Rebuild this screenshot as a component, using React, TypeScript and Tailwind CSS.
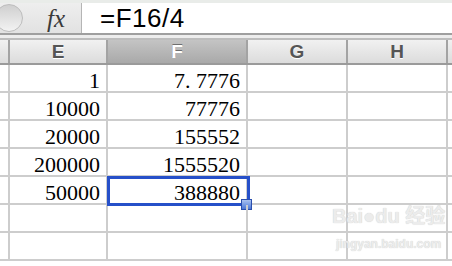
import React from "react";

const serif = { fontFamily: '"Liberation Serif", "Times New Roman", serif' };

const cols = [
  { key: "rh", w: "w-[10px]" },
  { key: "E", w: "w-[98px]" },
  { key: "F", w: "w-[140px]" },
  { key: "G", w: "w-[100px]" },
  { key: "H", w: "w-[100px]" },
];

// rows of data: [E, F]
const rows: [string, string][] = [
  ["1", "7. 7776"],
  ["10000", "77776"],
  ["20000", "155552"],
  ["200000", "1555520"],
  ["50000", "388880"],
  ["", ""],
  ["", ""],
];

function FormulaBar() {
  return (
    <div className="flex flex-col">
      <div className="h-[3px] bg-[#e9ece9]" />
      <div className="flex h-[30px]">
        <div className="relative flex w-[82px] shrink-0 items-center overflow-hidden border-r border-[#b5b5b5] bg-gradient-to-b from-[#eeeeee] to-[#e2e2e2]">
          <div className="absolute -left-[5px] top-[1px] h-[28px] w-[28px] rounded-full border border-[#bdbdbd] bg-gradient-to-b from-[#cfcfcf] to-[#f3f3f3]" />
          <span
            className="ml-[47px] text-[25px] italic leading-none text-[#3a3a3a]"
            style={serif}
          >
            fx
          </span>
        </div>
        <div className="flex flex-1 items-center bg-white pl-[18px]">
          <span
            className="text-[26px] leading-none tracking-[0.5px] text-black"
            style={{ fontFamily: '"Liberation Sans", Arial, sans-serif' }}
          >
            =F16/4
          </span>
        </div>
      </div>
      <div className="h-[2px] bg-[#9f9f9f]" />
      <div className="h-[3px] bg-[#ededed]" />
    </div>
  );
}

function HeaderRow() {
  return (
    <div className="flex h-[27px] border-y-2 border-t-[#bdbdbd] border-b-[#9a9a9a]">
      {cols.map((c) => (
        <div
          key={c.key}
          className={`${c.w} flex shrink-0 items-center justify-center border-r-2 border-[#a3a3a3] ${
            c.key === "F"
              ? "bg-gradient-to-b from-[#c4c4c4] to-[#a9a9a9] text-white [text-shadow:0_-1px_0_#6f6f6f]"
              : "bg-gradient-to-b from-[#f1f1f1] to-[#dcdcdc] text-[#555] [text-shadow:0_1px_0_#ffffff]"
          }`}
        >
          <span
            className="text-[19px] font-bold leading-none"
            style={{ fontFamily: '"Liberation Sans", Arial, sans-serif' }}
          >
            {c.key === "rh" ? "" : c.key}
          </span>
        </div>
      ))}
      <div className="flex-1 bg-gradient-to-b from-[#f1f1f1] to-[#dcdcdc]" />
    </div>
  );
}

function GridRow({ e, f, selected }: { e: string; f: string; selected: boolean }) {
  return (
    <div className="flex h-[28px] border-b-2 border-[#cdcdcd]">
      <div className="w-[10px] shrink-0 border-r-2 border-[#cdcdcd]" />
      <div
        className="flex w-[98px] shrink-0 items-center justify-end border-r-2 border-[#cdcdcd] pr-[6px] pt-[6px] text-[22px] leading-none text-black"
        style={serif}
      >
        {e}
      </div>
      <div
        className="relative flex w-[140px] shrink-0 items-center justify-end border-r-2 border-[#cdcdcd] pr-[6px] pt-[6px] text-[22px] leading-none text-black"
        style={serif}
      >
        <span className="whitespace-pre">{f}</span>
        {selected && (
          <>
            <div className="absolute -left-[1px] -top-[1px] h-[30px] w-[143px] border-[3px] border-[#2650c9]" />
            <div className="absolute left-[133px] top-[22px] h-[11px] w-[11px] border border-[#2a4fae] bg-gradient-to-b from-[#a9c1f0] to-[#4d78d6]" />
          </>
        )}
      </div>
      <div className="w-[100px] shrink-0 border-r-2 border-[#cdcdcd]" />
      <div className="w-[100px] shrink-0 border-r-2 border-[#cdcdcd]" />
      <div className="flex-1" />
    </div>
  );
}

export default function App() {
  return (
    <div className="relative h-[266px] w-[452px] overflow-hidden bg-white">
      <FormulaBar />
      <HeaderRow />
      {rows.map((r, i) => (
        <GridRow key={i} e={r[0]} f={r[1]} selected={i === 4} />
      ))}
      {/* watermark */}
      <div
        className="pointer-events-none absolute left-[332px] top-[206px] flex flex-col items-center whitespace-nowrap text-[#ececec] [text-shadow:0_0_1px_#c4c4c4]"
        style={{ fontFamily: '"Liberation Sans", Arial, "Noto Sans CJK SC", sans-serif' }}
      >
        <span className="text-[20px] font-bold leading-none">Bai●du 经验</span>
        <span className="mt-[12px] text-[12px] font-bold leading-none">jingyan.baidu.com</span>
      </div>
    </div>
  );
}
